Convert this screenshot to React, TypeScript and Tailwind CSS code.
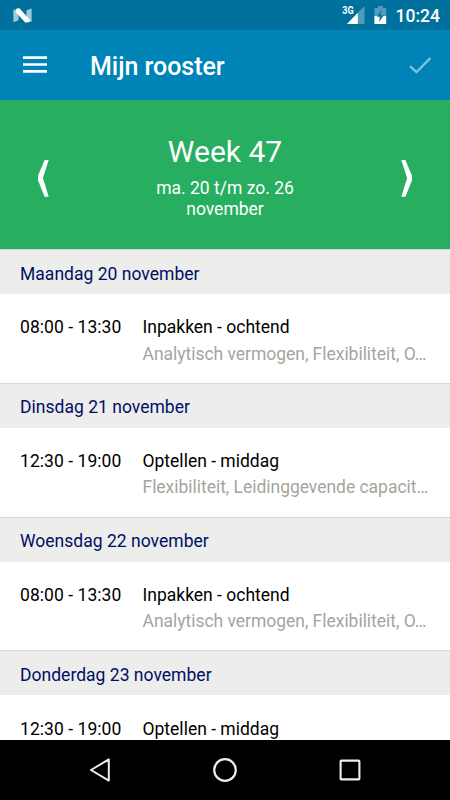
type Shift = {
  day: string;
  time: string;
  title: string;
  skills?: string;
};

const shifts: readonly Shift[] = [
  {
    day: "Maandag 20 november",
    time: "08:00 - 13:30",
    title: "Inpakken - ochtend",
    skills: "Analytisch vermogen, Flexibiliteit, O…",
  },
  {
    day: "Dinsdag 21 november",
    time: "12:30 - 19:00",
    title: "Optellen - middag",
    skills: "Flexibiliteit, Leidinggevende capacit…",
  },
  {
    day: "Woensdag 22 november",
    time: "08:00 - 13:30",
    title: "Inpakken - ochtend",
    skills: "Analytisch vermogen, Flexibiliteit, O…",
  },
  {
    day: "Donderdag 23 november",
    time: "12:30 - 19:00",
    title: "Optellen - middag",
  },
];

function StatusBar() {
  return (
    <div className="flex h-[30px] shrink-0 items-center bg-[#00719d] pl-[13px] pr-[10px] text-white">
      <svg width="19" height="15" viewBox="0 0 19 15" aria-hidden>
        <path d="M0.4 1.3 5.5 4v8.2L0.4 14.2z" fill="#9fcadb" />
        <path d="M18.6 0.5v13.4l-5.2-2.5V2.6z" fill="#9fcadb" />
        <path d="M2.7 1.2Q4.5 0 6.4 0.3L17.6 12.5Q16.8 15 12.2 14.4L2.6 3.9z" fill="#fff" />
      </svg>
      <div className="ml-auto flex items-center">
        <svg width="24" height="20" viewBox="0 0 24 20" aria-hidden>
          <path d="M23.5 1v18H6z" fill="#4c9cba" />
          <path d="M16.8 7.7V19H6z" fill="#fff" />
          <text x="1.2" y="9" fill="#fff" fontFamily="Roboto, sans-serif" fontSize="10.4" fontWeight="700" textLength="11.4" lengthAdjust="spacingAndGlyphs">
            3G
          </text>
        </svg>
        <svg className="ml-[9px]" width="14" height="20" viewBox="0 0 14 20" aria-hidden>
          <path d="M4 1h5v2h3.2v8H0.4V3H4z" fill="#4c9cba" />
          <path d="M0.4 11h11.8v8H0.4z" fill="#fff" />
          <path d="M7.4 5.2 3 11.8h2.9l-1 5.2 5-6.8H6.6z" fill="#00719d" />
        </svg>
        <span className="ml-[8px] mt-px text-[17.5px] font-medium leading-5">10:24</span>
      </div>
    </div>
  );
}

function AppBar() {
  return (
    <header className="flex h-[70px] shrink-0 items-center bg-[#0083b7] pl-[23px] pr-[18px] text-white">
      <svg width="24" height="18" viewBox="0 0 24 18" fill="#fff" aria-hidden>
        <path d="M0 0.3h24v2.6H0zM0 7.2h24v2.6H0zM0 14.1h24v2.6H0z" />
      </svg>
      <h1 className="ml-[43px] mt-[3px] text-[25px] font-medium leading-8 tracking-[-0.03px]">Mijn rooster</h1>
      <svg className="ml-auto" width="24" height="20" viewBox="0 0 24 20" fill="none" aria-hidden>
        <path d="M2.1 11.1 8.4 17.2 22.3 3.1" stroke="#80c1db" strokeWidth="2.3" />
      </svg>
    </header>
  );
}

function WeekPicker() {
  return (
    <section className="flex h-[149px] shrink-0 justify-between bg-[#28ae61] px-[37px] text-white">
      <svg className="mt-[59px]" width="12" height="38" viewBox="0 0 12 38" aria-hidden>
        <path d="M7.6 1h4.1L5.9 19l5.8 18.8H7.6L1 21.3v-4.6z" fill="#fff" />
      </svg>
      <div className="w-[180px] pt-[34px] text-center">
        <h2 className="text-[30px] leading-[36px]">Week 47</h2>
        <p className="mt-[8px] text-[17.5px] leading-[20.5px]">
          ma. 20 t/m zo. 26
          <br />
          november
        </p>
      </div>
      <svg className="mt-[59px]" width="12" height="38" viewBox="0 0 12 38" aria-hidden>
        <path d="M4.4 1H0.3L6.1 19 0.3 37.8h4.1L11 21.3v-4.6z" fill="#fff" />
      </svg>
    </section>
  );
}

function ShiftItem({ shift }: { shift: Shift }) {
  return (
    <article className="h-[133.75px] shrink-0 text-[17.5px]">
      <h3 className="h-[45px] border-t border-[#d8d8d8] bg-[#ededeb] px-5 pt-[13.7px] leading-[21px] tracking-[0.02px] text-[#000f66]">
        {shift.day}
      </h3>
      <div className="flex pl-5 pt-[23.4px]">
        <div className="w-[122.5px] shrink-0 leading-[21px] tracking-[0.05px] text-black">{shift.time}</div>
        <div className="whitespace-nowrap">
          <p className="leading-[21px] text-black">{shift.title}</p>
          {shift.skills && (
            <p className="mt-[5.2px] leading-[21px] tracking-[-0.03px] text-[#a5a59d]">{shift.skills}</p>
          )}
        </div>
      </div>
    </article>
  );
}

function NavBar() {
  return (
    <nav className="flex h-[60px] shrink-0 items-center justify-between bg-black px-[87px]">
      <svg width="26" height="26" viewBox="0 0 26 26" fill="none" stroke="#eee" strokeWidth="2" strokeLinejoin="round" aria-hidden>
        <path d="M21.8 2.4v21.2L4 13z" />
      </svg>
      <svg width="26" height="26" viewBox="0 0 26 26" fill="none" stroke="#eee" strokeWidth="2.2" aria-hidden>
        <circle cx="13" cy="13" r="10.8" />
      </svg>
      <svg width="26" height="26" viewBox="0 0 26 26" fill="none" stroke="#eee" strokeWidth="2.1" aria-hidden>
        <rect x="3.6" y="3.6" width="18.8" height="18.8" rx="0.8" />
      </svg>
    </nav>
  );
}

export default function App() {
  return (
    <div className="flex h-[800px] w-[450px] flex-col overflow-hidden bg-white font-[Roboto,sans-serif]">
      <StatusBar />
      <AppBar />
      <WeekPicker />
      <main className="flex min-h-0 flex-1 flex-col overflow-hidden">
        {shifts.map((shift) => (
          <ShiftItem key={shift.day} shift={shift} />
        ))}
      </main>
      <NavBar />
    </div>
  );
}
